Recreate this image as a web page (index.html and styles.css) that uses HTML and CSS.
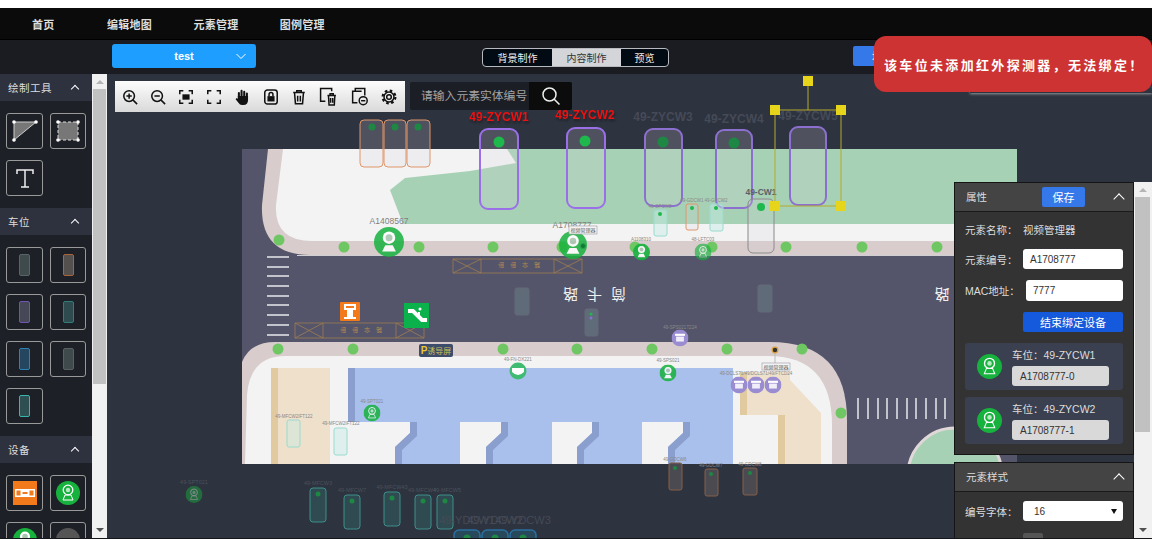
FILE: index.html
```html
<!DOCTYPE html>
<html lang="zh-CN">
<head>
    <meta charset="UTF-8">
    <title>编辑地图</title>
    <link rel="stylesheet" href="styles.css">
</head>
<body>
    <header class="nav">
        <a class="nav-item">首页</a>
        <a class="nav-item">编辑地图</a>
        <a class="nav-item">元素管理</a>
        <a class="nav-item">图例管理</a>
    </header>

    <div class="subbar">
        <div class="map-select">
            <span>test</span>
            <svg class="map-select-arrow" width="12" height="7" viewBox="0 0 12 7"><path d="M1.500 1 L6 5.500 L10.500 1"/></svg>
        </div>
        <div class="tabs">
            <span class="tab tab-wide">背景制作</span>
            <span class="tab tab-wide tab-active">内容制作</span>
            <span class="tab">预览</span>
        </div>
        <button class="bind-btn">地图</button>
    </div>

    <div class="main">
        <aside class="tools">
            <div class="tools-head"><span>绘制工具</span><i class="chev"></i></div>
            <div class="tools-grid">
                <div class="tool">
                    <svg width="30" height="30" viewBox="0 0 30 30"><polygon class="draw-fill" points="4,6 26,6 4,24"/><path class="draw-line" d="M4 6H26L4 24Z"/><circle class="draw-dot" cx="4" cy="6" r="1.800"/><circle class="draw-dot" cx="26" cy="6" r="1.800"/><circle class="draw-dot" cx="4" cy="24" r="1.800"/></svg>
                </div>
                <div class="tool">
                    <svg width="30" height="30" viewBox="0 0 30 30"><rect class="draw-fill draw-dash" x="5" y="6" width="20" height="18"/><circle class="draw-dot" cx="5" cy="6" r="1.800"/><circle class="draw-dot" cx="25" cy="6" r="1.800"/><circle class="draw-dot" cx="5" cy="24" r="1.800"/><circle class="draw-dot" cx="25" cy="24" r="1.800"/></svg>
                </div>
                <div class="tool">
                    <svg width="24" height="24" viewBox="0 0 24 24"><path class="draw-t" d="M4 8V4H20V8M12 4V21M8 21H16"/></svg>
                </div>
            </div>

            <div class="tools-head"><span>车位</span><i class="chev"></i></div>
            <div class="tools-grid">
                <div class="tool"><b class="mini mini-gray"></b></div>
                <div class="tool"><b class="mini mini-orange"></b></div>
                <div class="tool"><b class="mini mini-purple"></b></div>
                <div class="tool"><b class="mini mini-teal"></b></div>
                <div class="tool"><b class="mini mini-blue"></b></div>
                <div class="tool"><b class="mini mini-dark"></b></div>
                <div class="tool"><b class="mini mini-cyan"></b></div>
            </div>

            <div class="tools-head"><span>设备</span><i class="chev"></i></div>
            <div class="tools-grid">
                <div class="tool">
                    <svg width="24" height="24" viewBox="0 0 24 24"><rect width="24" height="24" fill="#f27a1a"/><rect x="2" y="8" width="20" height="8" fill="#fff"/><rect x="3.500" y="9.500" width="4" height="5" fill="#f27a1a"/><rect x="16.500" y="9.500" width="4" height="5" fill="#f27a1a"/><rect x="9.500" y="11" width="5" height="2" fill="#f27a1a"/></svg>
                </div>
                <div class="tool"><svg width="24" height="24" viewBox="0 0 24 24"><use href="#cam" width="24" height="24"/></svg></div>
                <div class="tool"><svg width="24" height="24" viewBox="0 0 24 24"><use href="#cam-solid" width="24" height="24"/></svg></div>
                <div class="tool"><svg width="24" height="24" viewBox="0 0 24 24"><circle cx="12" cy="12" r="12" fill="#555"/></svg></div>
            </div>
        </aside>

        <div class="scrollbar scrollbar-left">
            <i class="arrow-up"></i>
            <div class="thumb"></div>
            <i class="arrow-down"></i>
        </div>

        <div class="canvas">
            <svg class="map" width="1045" height="465" viewBox="107 74 1045 465">
                <defs>
                    <symbol id="cam" viewBox="-12 -12 24 24">
                        <circle r="12" fill="#17b23e"/>
                        <circle cy="-3" r="4.800" fill="none" stroke="#fff" stroke-width="1.300"/>
                        <circle cy="-3" r="2.200" fill="#fff" opacity=".7"/>
                        <path d="M-3 2 L-5 7 H5 L3 2Z" fill="none" stroke="#fff" stroke-width="1"/>
                    </symbol>
                    <symbol id="cam-solid" viewBox="-12 -12 24 24">
                        <circle r="12" fill="#17b23e"/>
                        <circle cy="-3.500" r="5" fill="#fff"/>
                        <circle cy="-3.500" r="2.800" fill="#a9c4b0"/>
                        <path d="M-3 2.500 L-5.500 7.500 H5.500 L3 2.500Z" fill="#fff"/>
                    </symbol>
                    <symbol id="box" viewBox="-12 -12 24 24">
                        <circle r="12" fill="#9a8cd0"/>
                        <rect x="-7" y="-6" width="14" height="3" fill="#fff"/>
                        <rect x="-5.500" y="-2" width="11" height="7" fill="#fff" opacity=".85"/>
                    </symbol>
                    <clipPath id="map-clip"><rect x="242" y="149" width="775" height="315"/></clipPath>
                </defs>

                <g clip-path="url(#map-clip)">
                    <rect class="road" x="242" y="149" width="775" height="315"/>
                    <path class="walk" d="M268 149 L262 205 Q260 255 310 255 H1017 V149Z"/>
                    <path class="ground" d="M283 149 L276 205 Q274 241 312 241 H1017 V149Z"/>
                    <polygon class="lawn" points="507,149 516,163 470,171 405,178 390,190 403,224 1017,224 1017,149"/>
                    <rect class="curb" x="297" y="255" width="720" height="1"/>

                    <path class="walk" d="M242 464 V362 Q250 342 275 342 H770 Q847 342 847 420 V464Z"/>
                    <path class="ground" d="M245 464 L247 395 Q250 356 285 356 H768 Q832 356 832 425 V464Z"/>
                    <rect class="beige" x="271" y="368" width="59" height="96"/>
                    <rect class="beige-dark" x="271" y="368" width="7" height="96"/>
                    <rect class="blue" x="348" y="368" width="385" height="96"/>
                    <rect class="blue-dark" x="348" y="368" width="7" height="54"/>

                    <polygon class="ground" points="330,422 410,422 410,433 395,447 395,464 330,464"/>
                    <polygon class="blue-dark" points="410,422 417,422 417,436 402,450 402,464 395,464 395,447 410,433"/>
                    <polygon class="ground" points="460,422 501,422 501,433 486,447 486,464 460,464"/>
                    <polygon class="blue-dark" points="501,422 508,422 508,436 493,450 493,464 486,464 486,447 501,433"/>
                    <polygon class="ground" points="552,422 592,422 592,433 577,447 577,464 552,464"/>
                    <polygon class="blue-dark" points="592,422 599,422 599,436 584,450 584,464 577,464 577,447 592,433"/>
                    <polygon class="ground" points="642,422 683,422 683,433 668,447 668,464 642,464"/>
                    <polygon class="blue-dark" points="683,422 690,422 690,436 675,450 675,464 668,464 668,447 683,433"/>

                    <polygon class="beige" points="740,372 790,372 790,380 821,413 821,464 778,464 778,415 740,415"/>
                    <rect class="beige-dark" x="740" y="372" width="7" height="43"/>
                    <rect class="beige-dark" x="778" y="415" width="7" height="49"/>

                    <circle class="lawn lawn-round" cx="955" cy="475" r="47"/>

                    <path class="zebra" d="M267 257H289M267 267H289M267 276H289M267 286H289M267 296H289M267 305H289M267 315H289M267 325H289M267 335H289"/>
                    <path class="zebra" d="M858 398V419M868 398V419M878 398V419M887 398V419M897 398V419M907 398V419M916 398V419M926 398V419M936 398V419M945 398V419"/>

                    <path class="hatch" d="M453 259H582V273H453ZM481 259V273M554 259V273M453 259L481 273M453 273L481 259M554 259L582 273M554 273L582 259"/>
                    <path class="hatch" d="M295 323H424V338H295ZM323 323V338M396 323V338M295 323L323 338M295 338L323 323M396 323L424 338M396 338L424 323"/>
                    <text class="hatch-text" x="520" y="269" transform="rotate(180 518 266)">路伞卧卧</text>
                    <text class="hatch-text" x="362" y="334" transform="rotate(180 360 331)">路伞卧卧</text>

                    <text class="road-text" x="600" y="303" transform="rotate(180 595 296)">简卡路</text>
                    <text class="road-text road-text-end" x="942" y="303" transform="rotate(180 942 296)">路</text>

                    <g class="trees">
                        <circle cx="279" cy="240"/><circle cx="344" cy="247"/><circle cx="419" cy="247"/><circle cx="493" cy="247"/><circle cx="562" cy="247"/><circle cx="635" cy="247"/><circle cx="712" cy="247"/><circle cx="786" cy="247"/><circle cx="862" cy="247"/><circle cx="937" cy="247"/>
                        <circle cx="278" cy="349"/><circle cx="353" cy="349"/><circle cx="503" cy="349"/><circle cx="577" cy="349"/><circle cx="652" cy="349"/><circle cx="727" cy="349"/><circle cx="802" cy="349"/><circle cx="841" cy="413"/>
                    </g>

                    <rect x="340" y="302" width="20" height="19" rx="1" fill="#f27a1a"/>
                    <path d="M344 304H356V310H353V317H356V319H344V317H347V310H344Z" fill="#fff"/>
                    <rect x="346" y="306" width="8" height="2" fill="#f27a1a"/>
                    <rect x="404" y="303" width="25" height="25" fill="#0bb14a"/>
                    <path class="escalator" d="M408 311H413L422 320H427"/>
                    <circle cx="420" cy="309" r="1.500" fill="#fff"/>
                    <path d="M419 312V317" stroke="#fff" stroke-width="2"/>
                </g>

                <rect class="spot spot-orange" x="360" y="120" width="23" height="47" rx="4"/>
                <rect class="spot spot-orange" x="384" y="120" width="22" height="47" rx="4"/>
                <rect class="spot spot-orange" x="407" y="120" width="23" height="47" rx="4"/>
                <circle class="dot-dim" cx="372" cy="127" r="3.500"/>
                <circle class="dot-dim" cx="395" cy="127" r="3.500"/>
                <circle class="dot-dim" cx="418" cy="127" r="3.500"/>

                <rect class="spot spot-purple" x="480" y="129" width="38" height="80" rx="8"/>
                <rect class="spot spot-purple" x="567" y="128" width="38" height="80" rx="8"/>
                <rect class="spot spot-purple-dim" x="645" y="129" width="37" height="77" rx="8"/>
                <rect class="spot spot-purple-dim" x="716" y="130" width="36" height="78" rx="8"/>
                <rect class="spot spot-purple-dim" x="790" y="127" width="36" height="78" rx="8"/>
                <circle class="dot" cx="499" cy="142" r="5.500"/>
                <circle class="dot" cx="585" cy="141" r="5.500"/>
                <circle class="dot-dim" cx="663" cy="142" r="5.500"/>
                <circle class="dot-dim" cx="734" cy="143" r="5.500"/>
                <text class="spot-label label-red" x="499" y="121">49-ZYCW1</text>
                <text class="spot-label label-red" x="585" y="119">49-ZYCW2</text>
                <text class="spot-label" x="663" y="121">49-ZYCW3</text>
                <text class="spot-label" x="734" y="123">49-ZYCW4</text>
                <text class="spot-label" x="808" y="120">49-ZYCW5</text>

                <rect class="spot spot-gray" x="748" y="199" width="26" height="54" rx="5"/>
                <circle class="dot" cx="761" cy="207" r="4"/>
                <text class="spot-label label-cw" x="761" y="195">49-CW1</text>

                <rect class="spot spot-teal" x="654" y="210" width="13" height="26" rx="2"/>
                <rect class="spot spot-orange" x="686" y="204" width="12" height="26" rx="2"/>
                <rect class="spot spot-teal" x="710" y="204" width="13" height="27" rx="2"/>
                <circle class="dot" cx="660" cy="214" r="2"/>
                <circle class="dot" cx="692" cy="208" r="2"/>
                <circle class="dot" cx="716" cy="208" r="2"/>
                <text class="tiny" x="660" y="208">49-GPCW2</text>
                <text class="tiny" x="692" y="202">49-GDCW1</text>
                <text class="tiny" x="716" y="202">49-GPCW2</text>

                <rect class="spot spot-road" x="515" y="288" width="14" height="27" rx="2"/>
                <rect class="spot spot-road" x="585" y="309" width="13" height="27" rx="2"/>
                <rect class="spot spot-road" x="758" y="285" width="14" height="27" rx="2"/>
                <circle class="dot" cx="591" cy="314" r="1.500"/>
                <circle cx="591" cy="318" r="1.500" fill="#8a70d0"/>

                <rect class="spot spot-teal" x="287" y="420" width="13" height="27" rx="2"/>
                <rect class="spot spot-teal" x="334" y="428" width="13" height="27" rx="2"/>
                <text class="tiny" x="294" y="418">49-MFCW2IFT122</text>
                <text class="tiny" x="341" y="425">49-MFCW2IFT122</text>

                <rect class="spot spot-deep-teal" x="310" y="488" width="16" height="34" rx="3"/>
                <rect class="spot spot-deep-teal" x="344" y="495" width="16" height="34" rx="3"/>
                <rect class="spot spot-deep-teal" x="384" y="492" width="16" height="34" rx="3"/>
                <rect class="spot spot-deep-teal" x="415" y="495" width="16" height="34" rx="3"/>
                <rect class="spot spot-deep-teal" x="437" y="495" width="16" height="34" rx="3"/>
                <circle class="dot-dim" cx="318" cy="494" r="2.500"/>
                <circle class="dot-dim" cx="352" cy="501" r="2.500"/>
                <circle class="dot-dim" cx="392" cy="498" r="2.500"/>
                <circle class="dot-dim" cx="423" cy="501" r="2.500"/>
                <circle class="dot-dim" cx="445" cy="501" r="2.500"/>
                <text class="tiny tiny-dim" x="318" y="485">49-MFCW3</text>
                <text class="tiny tiny-dim" x="352" y="492">49-MFCW7</text>
                <text class="tiny tiny-dim" x="392" y="489">49-MFCW43</text>
                <text class="tiny tiny-dim" x="422" y="492">49-MFCW4</text>
                <text class="tiny tiny-dim" x="447" y="492">49-MFCW5</text>

                <rect class="spot spot-deep-blue" x="454" y="530" width="26" height="30" rx="5"/>
                <rect class="spot spot-deep-blue" x="482" y="530" width="26" height="30" rx="5"/>
                <rect class="spot spot-deep-blue" x="510" y="530" width="26" height="30" rx="5"/>
                <circle class="dot-dim" cx="467" cy="538" r="3.500"/>
                <circle class="dot-dim" cx="495" cy="538" r="3.500"/>
                <circle class="dot-dim" cx="523" cy="538" r="3.500"/>
                <text class="spot-label label-small" x="467" y="524">49-YDCW1</text>
                <text class="spot-label label-small" x="495" y="524">49-YDCW2</text>
                <text class="spot-label label-small" x="523" y="524">49-YDCW3</text>

                <rect class="spot spot-deep-orange" x="669" y="463" width="13" height="27" rx="2"/>
                <rect class="spot spot-deep-orange" x="705" y="469" width="13" height="27" rx="2"/>
                <rect class="spot spot-deep-orange" x="743" y="468" width="14" height="27" rx="2"/>
                <circle class="dot-dim" cx="675" cy="468" r="2"/>
                <circle class="dot-dim" cx="711" cy="474" r="2"/>
                <circle class="dot-dim" cx="750" cy="473" r="2"/>
                <text class="tiny" x="675" y="461">49-GDCW6</text>
                <text class="tiny" x="711" y="467">49-GDCW7</text>
                <text class="tiny" x="750" y="466">49-GDCW8</text>

                <use href="#cam-solid" x="374" y="227" width="30" height="30" opacity=".85"/>
                <text class="device-label" x="389" y="224">A1408567</text>
                <use href="#cam-solid" x="559" y="231" width="28" height="28" opacity=".85"/>
                <text class="device-label" x="572" y="228">A1708777</text>
                <rect class="tag" x="569" y="226" width="28" height="8"/>
                <text class="tag-text" x="583" y="232">视频管理器</text>
                <circle cx="583" cy="246" r="2.500" fill="#0f7a34" stroke="#2c9c4c"/>

                <use href="#cam-solid" x="633" y="243.500" width="17" height="17" opacity=".9"/>
                <use href="#cam" x="694.500" y="243.500" width="17" height="17" opacity=".65"/>
                <use href="#cam" x="363.500" y="404.500" width="17" height="17" opacity=".85"/>
                <use href="#cam-solid" x="659.500" y="364.500" width="17" height="17" opacity=".85"/>
                <use href="#cam" x="185.500" y="486" width="17" height="17" opacity=".45"/>
                <circle cx="518" cy="371" r="8.500" fill="#3fbb72"/>
                <path d="M512 368H524V372Q518 378 512 372Z" fill="#fff"/>
                <text class="tiny" x="641" y="241">A1108310</text>
                <text class="tiny" x="703" y="241">48-LFTC03</text>
                <text class="tiny" x="518" y="361">49-FN-DX221</text>
                <text class="tiny" x="372" y="403">49-SPT021</text>
                <text class="tiny" x="668" y="362">49-SPS021</text>
                <text class="tiny tiny-dim" x="194" y="484">49-SPT021</text>

                <use href="#box" x="671.500" y="329.500" width="17" height="17"/>
                <use href="#box" x="730.500" y="376.500" width="17" height="17"/>
                <use href="#box" x="747.500" y="376.500" width="17" height="17"/>
                <use href="#box" x="764.500" y="376.500" width="17" height="17"/>
                <text class="tiny" x="680" y="329">49-SPS021T224</text>
                <text class="tiny" x="756" y="375">49-DCLS71/49/DCLS71/49/FTCD24</text>

                <path class="tag-line" d="M775 350V363"/>
                <circle cx="775" cy="350" r="2.800" fill="#333" stroke="#d9a13a" stroke-width="1.200"/>
                <rect class="tag" x="762" y="363" width="28" height="7"/>
                <text class="tag-text" x="776" y="369">视频管理器</text>

                <rect class="sign" x="419" y="344" width="34" height="13" rx="2"/>
                <text class="sign-text" x="436" y="353.500"><tspan class="sign-p">P</tspan>诱导屏</text>

                <path class="select-line" d="M808 81V110M775 110H841V206H775Z"/>
                <rect class="handle" x="803" y="76" width="10" height="10"/>
                <rect class="handle" x="770" y="105" width="10" height="10"/>
                <rect class="handle" x="836" y="105" width="10" height="10"/>
                <rect class="handle" x="770" y="201" width="10" height="10"/>
                <rect class="handle" x="836" y="201" width="10" height="10"/>
            </svg>

            <div class="toolbar">
                <svg class="ico" viewBox="0 0 18 18"><circle cx="8" cy="8" r="6"/><path d="M12.500 12.500L17 17M5 8H11M8 5V11"/></svg>
                <svg class="ico" viewBox="0 0 18 18"><circle cx="8" cy="8" r="6"/><path d="M12.500 12.500L17 17M5 8H11"/></svg>
                <svg class="ico" viewBox="0 0 18 18"><path d="M2 6V2H6M12 2H16V6M16 12V16H12M6 16H2V12"/><rect class="ico-fill" x="5" y="6" width="8" height="6"/></svg>
                <svg class="ico" viewBox="0 0 18 18"><path d="M2 6V2H6M12 2H16V6M16 12V16H12M6 16H2V12"/></svg>
                <svg class="ico" viewBox="0 0 18 18"><path class="ico-finger" d="M5.500 9V4.500M8.500 8V2M11.500 8V3M14.500 10V5"/><path class="ico-fill" d="M4.300 8H15.800V12Q15.800 18 10.500 18H9Q6.500 18 5 15.500L1.800 11.500 3 10.200 4.300 11Z"/></svg>
                <svg class="ico" viewBox="0 0 18 18"><rect x="2" y="1" width="14" height="16" rx="3"/><rect class="ico-fill" x="5" y="8" width="8" height="6"/><path d="M6.800 8V6.200A2.200 2.200 0 0 1 11.200 6.200V8"/></svg>
                <svg class="ico" viewBox="0 0 18 18"><path d="M2.500 4H15.500M6.500 4V2H11.500V4M4 4.500L5 16.500H13L14 4.500M7.500 7.500V14M10.500 7.500V14"/></svg>
                <svg class="ico ico-wide" viewBox="0 0 18 18"><path d="M12 4V1.500H1.500V13.500H6"/><path d="M8 8H16M10.500 8V6.500H13.500V8M9 8.500L9.500 17H14.500L15 8.500M11 10.500V15M13 10.500V15"/></svg>
                <svg class="ico ico-wide" viewBox="0 0 18 18"><path d="M5 4V1.500H14V8M11 4H2.500V15H7"/><circle cx="12.500" cy="13" r="3.800"/><path d="M10.500 13H14.500"/></svg>
                <svg class="ico" viewBox="0 0 18 18"><circle class="ico-teeth" cx="9" cy="9" r="7.200"/><circle cx="9" cy="9" r="5.600"/><circle cx="9" cy="9" r="2.600"/></svg>
            </div>

            <div class="search">
                <span class="search-text">请输入元素实体编号</span>
                <span class="search-btn">
                    <svg width="20" height="20" viewBox="0 0 20 20"><circle class="search-ico" cx="8.500" cy="8.500" r="6.500"/><path class="search-ico" d="M13.200 13.200L18.500 18.500"/></svg>
                </span>
            </div>

            <div class="side">
                <div class="panels">
                    <section class="panel">
                        <div class="panel-head">
                            <span>属性</span>
                            <button class="save-btn">保存</button>
                            <i class="chev chev-thin"></i>
                        </div>
                        <div class="panel-body">
                            <div class="row"><label>元素名称：</label><span class="value">视频管理器</span></div>
                            <div class="row"><label>元素编号：</label><span class="field">A1708777</span></div>
                            <div class="row row-mac"><label>MAC地址：</label><span class="field field-mac">7777</span></div>
                            <div class="row row-action"><button class="end-btn">结束绑定设备</button></div>
                            <div class="bind-card">
                                <svg width="25" height="25" viewBox="0 0 24 24"><use href="#cam" width="24" height="24"/></svg>
                                <div class="bind-info">
                                    <span>车位：49-ZYCW1</span>
                                    <span class="bind-code">A1708777-0</span>
                                </div>
                            </div>
                            <div class="bind-card">
                                <svg width="25" height="25" viewBox="0 0 24 24"><use href="#cam" width="24" height="24"/></svg>
                                <div class="bind-info">
                                    <span>车位：49-ZYCW2</span>
                                    <span class="bind-code">A1708777-1</span>
                                </div>
                            </div>
                        </div>
                    </section>
                    <section class="panel">
                        <div class="panel-head">
                            <span>元素样式</span>
                            <i class="chev chev-thin"></i>
                        </div>
                        <div class="panel-body panel-body-style">
                            <div class="row"><label>编号字体：</label><span class="field field-select">16<i class="select-caret"></i></span></div>
                            <div class="row row-color"><label>文字颜色：</label><span class="swatch"></span></div>
                        </div>
                    </section>
                </div>
                <div class="scrollbar scrollbar-right">
                    <i class="arrow-up"></i>
                    <div class="thumb"></div>
                    <i class="arrow-down"></i>
                </div>
            </div>
        </div>
    </div>

    <div class="toast-shadow"></div>
    <div class="toast">该车位未添加红外探测器，无法绑定！</div>
</body>
</html>
```

FILE: styles.css
```css
* {
    box-sizing: border-box;
}
html, body {
    margin: 0;
    height: 539px;
    overflow: hidden;
}
body {
    padding-top: 8px;
    background-color: #fff;
    font-family: "Liberation Sans", "Noto Sans CJK SC", sans-serif;
    display: flex;
    flex-direction: column;
    position: relative;
}

/* top nav */
.nav {
    height: 32px;
    flex: none;
    display: flex;
    align-items: center;
    background-color: #0b0b0b;
    border-bottom: 1px solid #000;
}
.nav-item {
    width: 86.4px;
    text-align: center;
    color: #ddd;
    font-size: 11px;
    font-weight: bold;
    letter-spacing: .25px;
}

/* second bar */
.subbar {
    height: 34px;
    flex: none;
    display: flex;
    align-items: center;
    background-color: #1a1c22;
    position: relative;
}
.map-select {
    width: 144px;
    height: 24px;
    margin-left: 112px;
    margin-top: -2px;
    border-radius: 3px;
    background-color: #1e9fff;
    color: #fff;
    font-size: 11px;
    font-weight: bold;
    display: flex;
    align-items: center;
    justify-content: center;
    position: relative;
}
.map-select-arrow {
    position: absolute;
    right: 9px;
    top: 9px;
}
.map-select-arrow path {
    fill: none;
    stroke: #fff;
    stroke-width: 1;
}
.tabs {
    margin-left: 226px;
    height: 19px;
    width: 187px;
    display: flex;
    border: 1px solid #b8bac0;
    border-radius: 4px;
    overflow: hidden;
    background-color: #020a14;
    color: #eee;
    font-size: 10px;
}
.tab {
    flex: 1;
    display: flex;
    align-items: center;
    justify-content: center;
}
.tab-wide {
    flex: none;
    width: 69px;
}
.tab-active {
    background-color: #d4d5d9;
    color: #333;
}
.bind-btn {
    margin-left: 184px;
    margin-top: -2px;
    height: 20px;
    width: 60px;
    border: 0;
    border-radius: 2px;
    background-color: #3478ea;
    color: #fff;
    font-family: inherit;
    font-size: 11px;
    padding: 0;
}

/* main area */
.main {
    flex: 1;
    min-height: 0;
    display: flex;
    border-bottom: 1px solid #14161a;
}
.tools {
    width: 92px;
    flex: none;
    background-color: #1e2027;
    overflow: hidden;
}
.tools-head {
    height: 27px;
    padding: 0 14px 0 8px;
    display: flex;
    align-items: center;
    justify-content: space-between;
    background-color: #2d323e;
    color: #ddd;
    font-size: 10.500px;
    letter-spacing: .5px;
}
.chev {
    width: 6px;
    height: 6px;
    margin-top: 3px;
    border-left: 1.500px solid #fff;
    border-top: 1.500px solid #fff;
    transform: rotate(45deg);
}
.tools-grid {
    display: grid;
    grid-template-columns: 37px 36px;
    gap: 11px 7px;
    padding: 12px 0 12px 6px;
}
.tool {
    height: 36px;
    border: 1px solid #999;
    border-radius: 3px;
    display: flex;
    align-items: center;
    justify-content: center;
    overflow: hidden;
}
.draw-fill {
    fill: #777;
}
.draw-line {
    fill: none;
    stroke: #ccc;
    stroke-width: 1;
}
.draw-dash {
    stroke: #ddd;
    stroke-width: 1;
    stroke-dasharray: 3 2;
}
.draw-dot {
    fill: #fff;
}
.draw-t {
    fill: none;
    stroke: #eee;
    stroke-width: 1.500;
}
.mini {
    width: 11px;
    height: 22px;
    border-radius: 2px;
    border: 1px solid;
}
.mini-gray {
    background-color: #3e4a4c;
    border-color: #59646a;
}
.mini-orange {
    background-color: #54504e;
    border-color: #a9643a;
}
.mini-purple {
    background-color: #474857;
    border-color: #6f55b0;
}
.mini-teal {
    background-color: #2e4c4f;
    border-color: #2f7f78;
}
.mini-blue {
    background-color: #24465f;
    border-color: #2f80b5;
}
.mini-dark {
    background-color: #3f4a4d;
    border-color: #5a5f62;
}
.mini-cyan {
    background-color: #2d4f52;
    border-color: #38b5ad;
}

/* scrollbars */
.scrollbar {
    flex: none;
    background-color: #f1f1f1;
    position: relative;
}
.scrollbar .thumb {
    position: absolute;
    background-color: #c1c1c1;
}
.arrow-up, .arrow-down {
    position: absolute;
    left: 50%;
    margin-left: -4px;
    border-left: 4px solid transparent;
    border-right: 4px solid transparent;
}
.arrow-up {
    top: 6px;
    border-bottom: 4px solid #b5b5b5;
}
.arrow-down {
    bottom: 6px;
    border-top: 4px solid #505050;
}
.scrollbar-left {
    width: 15px;
}
.scrollbar-left .thumb {
    left: 1px;
    right: 1px;
    top: 15px;
    height: 295px;
}
.scrollbar-right {
    width: 18px;
}
.scrollbar-right .thumb {
    left: 1px;
    right: 2px;
    top: 15px;
    height: 235px;
}

/* canvas */
.canvas {
    flex: 1;
    min-width: 0;
    background-color: #2d333f;
    position: relative;
    overflow: hidden;
}
.map {
    display: block;
}
.road { fill: #54556a; }
.walk { fill: #d8cccc; }
.ground { fill: #f3f3f3; }
.lawn { fill: #a7d1b5; }
.lawn-round {
    stroke: #e0d8d8;
    stroke-width: 3;
}
.curb { fill: #cfcfd4; }
.beige { fill: #eee0cb; }
.beige-dark { fill: #e2caa0; }
.blue { fill: #a9bfec; }
.blue-dark { fill: #8a9fcd; }
.zebra {
    fill: none;
    stroke: #e8e8ec;
    stroke-width: 1.500;
}
.hatch {
    fill: none;
    stroke: #a07c50;
    stroke-width: .800;
}
.hatch-text {
    fill: #b58a50;
    font-size: 6px;
    text-anchor: middle;
    letter-spacing: 6px;
}
.road-text {
    fill: #f0f0f0;
    font-size: 15px;
    text-anchor: middle;
    letter-spacing: 9px;
}
.road-text-end {
    letter-spacing: 0;
}
.trees circle {
    r: 5.500px;
    fill: #6fc763;
}
.escalator {
    fill: none;
    stroke: #fff;
    stroke-width: 4;
}

.spot {
    fill: rgba(216, 210, 220, .2);
    stroke-width: 1;
}
.spot-orange { stroke: #e0966b; }
.spot-purple {
    stroke: #9a6fe8;
    stroke-width: 2;
}
.spot-purple-dim {
    stroke: #8c70cf;
    stroke-width: 2;
}
.spot-gray { stroke: #8a8a8a; }
.spot-teal {
    stroke: #9adcd0;
    fill: rgba(200, 235, 230, .45);
}
.spot-road {
    stroke: #646a76;
    fill: #5f6b78;
}
.spot-deep-teal {
    stroke: #3e8f8a;
    fill: #2f4a50;
}
.spot-deep-blue {
    stroke: #2a70a0;
    stroke-width: 1.500;
    fill: #28485c;
}
.spot-deep-orange {
    stroke: #85604a;
    fill: #4a4a50;
}
.dot { fill: #1fb84c; }
.dot-dim { fill: #1e8744; }
.spot-label {
    fill: #454a57;
    font-size: 12px;
    font-weight: bold;
    text-anchor: middle;
}
.label-small {
    font-size: 11px;
    font-weight: normal;
}
.label-cw {
    fill: #5a6068;
    font-size: 8.500px;
}
.label-red {
    fill: #f01010;
    filter: drop-shadow(1px 2px 1px rgba(0, 0, 0, .35));
}
.tiny {
    fill: #888;
    font-size: 4.500px;
    text-anchor: middle;
}
.tiny-dim {
    fill: #4c515c;
    font-size: 5.500px;
}
.device-label {
    fill: #808080;
    font-size: 8.500px;
    text-anchor: middle;
}
.tag {
    fill: #f4f4f4;
    stroke: #a5a5b0;
    stroke-width: .700;
}
.tag-text {
    fill: #666;
    font-size: 5px;
    text-anchor: middle;
}
.tag-line {
    stroke: #bbb;
    stroke-width: 1;
}
.sign {
    fill: #3d4c6b;
}
.sign-text {
    fill: #cdbf55;
    font-size: 8px;
    text-anchor: middle;
}
.sign-p {
    fill: #e9c92c;
    font-weight: bold;
    font-size: 10px;
}
.select-line {
    fill: none;
    stroke: #b5ab2c;
    stroke-width: 1;
}
.handle {
    fill: #e6d51a;
}

/* floating toolbar */
.toolbar {
    position: absolute;
    left: 8px;
    top: 7px;
    width: 290px;
    height: 31px;
    padding: 0 8px 0 7px;
    display: flex;
    align-items: center;
    justify-content: space-between;
    background: linear-gradient(#fdfdfd, #d9d9d9);
}
.ico {
    width: 16px;
    height: 16px;
    fill: none;
    stroke: #111;
    stroke-width: 1.700;
}
.ico-wide {
    width: 19px;
    height: 19px;
    stroke-width: 1.400;
}
.ico .ico-fill {
    fill: #111;
    stroke: none;
}
.ico .ico-finger {
    stroke-width: 2.300;
    stroke-linecap: round;
}
.ico .ico-teeth {
    stroke-width: 2.400;
    stroke-dasharray: 2.900 2.750;
}
.search {
    position: absolute;
    left: 303px;
    top: 8px;
    width: 162px;
    height: 28px;
    border-radius: 2px;
    overflow: hidden;
    display: flex;
    background-color: #1c1e26;
}
.search-text {
    flex: 1;
    padding-left: 11px;
    line-height: 29px;
    color: #a5a5a5;
    font-size: 11.800px;
    white-space: nowrap;
}
.search-btn {
    width: 43px;
    display: flex;
    align-items: center;
    justify-content: center;
    background-color: #0c0c0c;
}
.search-ico {
    fill: none;
    stroke: #eee;
    stroke-width: 1.500;
}

/* right side panels */
.side {
    position: absolute;
    left: 847px;
    top: 108px;
    bottom: 0;
    width: 198px;
    display: flex;
}
.panels {
    width: 180px;
    flex: none;
    overflow: hidden;
}
.panel {
    background-color: #333;
    border: 1px solid #151515;
    margin-bottom: 7px;
    color: #ddd;
    font-size: 10.500px;
}
.panel-head {
    height: 29px;
    padding: 0 10px 1px 11px;
    display: flex;
    align-items: center;
    justify-content: space-between;
    background-color: #444;
    border-bottom: 1px solid #1a1a1a;
    color: #ddd;
}
.chev-thin {
    width: 8px;
    height: 8px;
    margin-top: 4px;
    border-width: 1px;
}
.save-btn {
    width: 43px;
    height: 20px;
    margin-left: 45px;
    margin-right: 20px;
    border: 0;
    border-radius: 2px;
    background-color: #3478ea;
    color: #fff;
    font-family: inherit;
    font-size: 11px;
    padding: 0;
}
.panel-body {
    padding: 7px 10px 10px;
}
.panel-body-style {
    padding-top: 9px;
}
.row {
    height: 20px;
    margin-top: 10px;
    display: flex;
    align-items: center;
}
.row:first-child {
    margin-top: 0;
}
.row label {
    width: 58px;
    flex: none;
    white-space: nowrap;
}
.row-mac {
    height: 21px;
    margin-top: 11px;
}
.row-mac label {
    width: 61px;
}
.row-action {
    margin-top: 11px;
    padding-left: 58px;
}
.row-color {
    margin-top: 12px;
}
.field {
    flex: 1;
    height: 100%;
    padding-left: 7px;
    display: flex;
    align-items: center;
    border-radius: 3px;
    background-color: #fff;
    color: #333;
    font-size: 10px;
}
.field-select {
    padding-left: 11px;
    justify-content: space-between;
    padding-right: 6px;
}
.select-caret {
    border-left: 3px solid transparent;
    border-right: 3px solid transparent;
    border-top: 5px solid #111;
}
.swatch {
    width: 20px;
    height: 20px;
    border-radius: 2px;
    background-color: #555;
}
.end-btn {
    width: 100px;
    height: 20px;
    border: 0;
    border-radius: 2px;
    background-color: #1559dc;
    color: #fff;
    font-family: inherit;
    font-size: 11px;
    padding: 0;
}
.bind-card {
    height: 47px;
    margin-top: 7px;
    padding: 0 14px 0 12px;
    display: flex;
    align-items: center;
    border-radius: 3px;
    background-color: #3a4050;
}
.row-action + .bind-card {
    margin-top: 11px;
}
.bind-info {
    margin-left: 10px;
    flex: 1;
    display: flex;
    flex-direction: column;
    gap: 4px;
    color: #ddd;
}
.bind-code {
    height: 20px;
    padding-left: 8px;
    display: flex;
    align-items: center;
    border-radius: 3px;
    background-color: #d9d9d9;
    color: #333;
    font-size: 10px;
}

/* message on top of everything */
.toast {
    position: absolute;
    left: 874px;
    top: 36px;
    width: 278px;
    height: 56px;
    padding-left: 10px;
    display: flex;
    align-items: center;
    border-radius: 12px;
    background-color: #cd3333;
    color: #fff;
    font-size: 13px;
    font-weight: bold;
    letter-spacing: 2.330px;
    white-space: nowrap;
}
.toast-shadow {
    position: absolute;
    left: 970px;
    top: 88px;
    width: 182px;
    height: 5px;
    box-shadow: 0 1px 3px rgba(220, 220, 220, .6);
}
```
